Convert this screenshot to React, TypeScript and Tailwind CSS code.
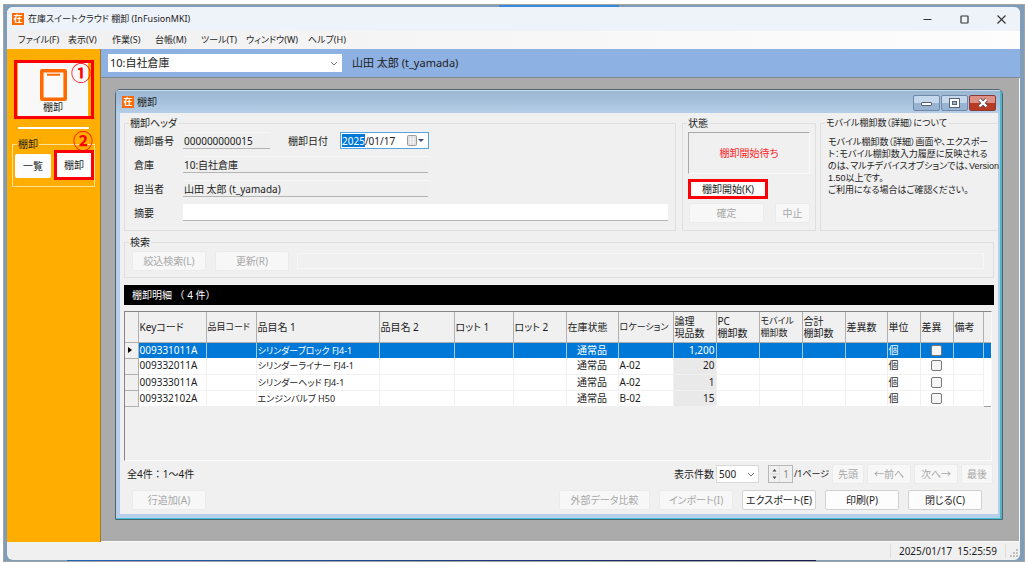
import { useEffect, useRef } from "react";
import type { ReactNode } from "react";

const menuItems = [
  { label: "ファイル(F)", className: "w-[50px]" },
  { label: "表示(V)", className: "w-[44px]" },
  { label: "作業(S)", className: "w-[43px]" },
  { label: "台帳(M)", className: "w-[46px]" },
  { label: "ツール(T)", className: "w-[45px]" },
  { label: "ウィンドウ(W)", className: "w-[62px]" },
  { label: "ヘルプ(H)", className: "w-[50px]" },
];

const columns = [
  { label: "Keyコード", className: "w-[68px]" },
  { label: "品目コード", className: "w-[50px] text-[9px]" },
  { label: "品目名 1", className: "w-[123px]" },
  { label: "品目名 2", className: "w-[75px]" },
  { label: "ロット 1", className: "w-[59px]" },
  { label: "ロット 2", className: "w-[53px]" },
  { label: "在庫状態", className: "w-[52px]" },
  { label: "ロケーション", className: "w-[55px] text-[9px]" },
  { label: "論理\n現品数", className: "w-[43px]" },
  { label: "PC\n棚卸数", className: "w-[43px]" },
  { label: "モバイル\n棚卸数", className: "w-[43px] text-[9px]" },
  { label: "合計\n棚卸数", className: "w-[43px]" },
  { label: "差異数", className: "w-[42px]" },
  { label: "単位", className: "w-[33px]" },
  { label: "差異", className: "w-[33px]" },
  { label: "備考", className: "w-[30px]" },
];

const rows = [
  { key: "009331011A", name: "シリンダーブロック FJ4-1", location: "", qty: "1,200" },
  { key: "009332011A", name: "シリンダーライナー FJ4-1", location: "A-02", qty: "20" },
  { key: "009333011A", name: "シリンダーヘッド FJ4-1", location: "A-02", qty: "1" },
  { key: "009332102A", name: "エンジンバルブ H50", location: "B-02", qty: "15" },
];

const AppLogo = () => (
  <span className="flex h-3 w-3 shrink-0 items-center justify-center bg-[#ff6a00] text-[9px] leading-3 font-bold text-white">
    在
  </span>
);

const Chevron = () => (
  <svg viewBox="0 0 8 5" className="pointer-events-none absolute right-1 h-[5px] w-2">
    <path d="M1 1l3 3 3-3" fill="none" stroke="#666" strokeWidth="0.9" />
  </svg>
);

type GroupProps = {
  title: string;
  className?: string;
  children?: ReactNode;
};

const Group = ({ title, className = "", children }: GroupProps) => (
  <fieldset className={`min-w-0 border border-[#dfdfdf] ${className}`}>
    <legend className="ml-1 px-px leading-3">{title}</legend>
    {children}
  </fieldset>
);

type PushButtonProps = {
  className?: string;
  disabled?: boolean;
  children?: ReactNode;
};

const PushButton = ({ className = "", disabled, children }: PushButtonProps) => (
  <button
    type="button"
    disabled={disabled}
    className={`flex h-5 shrink-0 items-center justify-center rounded-[2px] border text-[10px] leading-4 whitespace-nowrap ${
      disabled
        ? "border-[#ebebeb] bg-[#f7f7f7] text-[#a8a8a8]"
        : "border-[#d2d2d2] bg-[#fdfdfd] text-[#1c1c1c]"
    } ${className}`}
  >
    {children}
  </button>
);

type FieldProps = {
  id: string;
  label: string;
  value: string;
  width: string;
  readOnly?: boolean;
};

const Field = ({ id, label, value, width, readOnly }: FieldProps) => (
  <div className="flex h-[17px] items-center">
    <label htmlFor={id} className="w-[49px] shrink-0">
      {label}
    </label>
    <input
      id={id}
      defaultValue={value}
      readOnly={readOnly}
      className={`h-[17px] min-w-0 border-b border-[#b4b4b4] px-px outline-none ${
        readOnly ? "border-t border-t-[#f7f7f7] bg-[#efefef]" : "bg-white"
      } ${width}`}
    />
  </div>
);

const Sidebar = () => (
  <aside className="w-[94px] shrink-0 border-r border-[#9a7a30] bg-[#ffae00] px-[5px]">
    <div className="relative mt-[11px] ml-[2px] w-[80px] border-3 border-[#fb0007] pr-[3px] pl-px">
      <button
        type="button"
        className="flex h-[53px] w-full flex-col items-center justify-end bg-[#f8f8f8] pb-[3px] text-[10px] leading-3"
      >
        <svg viewBox="0 0 27 32" className="h-8 w-[27px]">
          <rect x="1.800" y="1.800" width="23.400" height="28.400" rx="0.500" fill="#fafafa" stroke="#ff6a00" strokeWidth="3.600" />
          <path d="M7 5.800h13" stroke="#ff6a00" strokeWidth="2" />
        </svg>
        <span>棚卸</span>
      </button>
      <span className="absolute -top-px right-0 text-[20px] leading-6 font-bold text-[#fb0007]">①</span>
    </div>
    <div className="mx-[6px] mt-2 h-[2px] bg-white" />
    <fieldset className="relative mt-[9px] h-[49px] border border-[#ffe09a]">
      <legend className="ml-[4px] px-px text-[10px] leading-3">棚卸</legend>
      <div className="flex gap-[3px] pl-[2px]">
        <button type="button" className="mt-[4px] h-6 w-9 rounded-[2px] bg-[#fcfcfc] text-[10px]">
          一覧
        </button>
        <button type="button" className="h-[30px] w-10 border-3 border-[#fb0007] bg-[#fcfcfc] text-[10px]">
          棚卸
        </button>
      </div>
      <span className="absolute -top-[20px] right-px text-[20px] leading-6 font-bold text-[#fb0007]">②</span>
    </fieldset>
  </aside>
);

const DateField = () => {
  const ref = useRef<HTMLInputElement>(null);

  // start with the year part selected
  useEffect(() => {
    ref.current?.focus();
    ref.current?.setSelectionRange(0, 4);
  }, []);

  return (
    <div className="flex h-[17px] w-[89px] shrink-0 items-center border border-[#55a3e0] bg-white pr-[3px]">
      <input
        id="stock-date"
        ref={ref}
        defaultValue="2025/01/17"
        className="h-[13px] w-[64px] min-w-0 flex-1 bg-white px-px outline-none selection:bg-[#0078d7] selection:text-white"
      />
      <svg viewBox="0 0 18 11" className="h-[11px] w-[18px] shrink-0">
        <rect x="0.500" y="0.500" width="9" height="10" rx="1" fill="#dcdce0" stroke="#a39a98" />
        <path d="M3.500 1v9M6.500 1v9M1 4h8M1 7h8" stroke="#f8f8fa" strokeWidth="0.700" />
        <path d="M11 4h6l-3 3z" fill="#35517c" />
      </svg>
    </div>
  );
};

const HeaderGroup = () => (
  <Group title="棚卸ヘッダ" className="flex-1">
    <div className="flex flex-col gap-[7px] pt-[3px] pr-[7px] pl-[9px]">
      <div className="flex items-center">
        <Field id="stock-no" label="棚卸番号" value="000000000015" width="w-[87px]" readOnly />
        <label htmlFor="stock-date" className="ml-[18px] w-[52px]">
          棚卸日付
        </label>
        <DateField />
      </div>
      <Field id="warehouse" label="倉庫" value="10:自社倉庫" width="w-[245px]" readOnly />
      <Field id="owner" label="担当者" value="山田 太郎 (t_yamada)" width="w-[245px]" readOnly />
      <Field id="summary" label="摘要" value="" width="flex-1" />
    </div>
  </Group>
);

const StatusGroup = () => (
  <Group title="状態" className="w-[134px] shrink-0">
    <div className="px-[5px] pt-[3px]">
      <div className="flex h-[42px] items-center justify-center border border-t-[#a8a8a8] border-r-[#fafafa] border-b-[#fafafa] border-l-[#a8a8a8] text-[#ff2828]">
        棚卸開始待ち
      </div>
      <button
        type="button"
        className="mt-[5px] flex h-5 w-[80px] items-center justify-center border-3 border-[#fb0007] bg-[#fdfdfd]"
      >
        棚卸開始(K)
      </button>
      <div className="mt-[4px] flex justify-between pl-px">
        <PushButton className="w-[75px]" disabled>
          確定
        </PushButton>
        <PushButton className="w-[35px]" disabled>
          中止
        </PushButton>
      </div>
    </div>
  </Group>
);

const NoteGroup = () => (
  <Group title="モバイル棚卸数（詳細）について" className="w-[178px] shrink-0 border-r-0 text-[9px]">
    <p className="pt-[7px] pl-[7px] font-['Liberation_Sans','Noto_Sans_CJK_JP',sans-serif] leading-3 whitespace-nowrap">
      モバイル棚卸数（詳細）画面や、エクスポー
      <br />
      ト：モバイル棚卸数入力履歴に反映される
      <br />
      のは、マルチデバイスオプションでは、Version
      <br />
      1.50以上です。
      <br />
      ご利用になる場合はご確認ください。
    </p>
  </Group>
);

const DetailTable = () => (
  <div className="mt-[6px] mr-[6px] flex-1 border-t border-r border-b border-l border-t-[#858585] border-r-[#fafafa] border-b-[#fafafa] border-l-[#858585]">
    <table className="w-full table-fixed border-b border-[#a0a0a0]">
      <thead>
        <tr className="h-[30px]">
          <th className="w-[13px] border-r border-b border-[#b0b0b0]" />
          {columns.map((column) => (
            <th
              key={column.label}
              className={`overflow-hidden border-r border-b border-[#b0b0b0] pl-px text-left align-middle leading-3 font-normal whitespace-pre ${column.className}`}
            >
              {column.label}
            </th>
          ))}
          <th className="border-b border-[#b0b0b0]" />
        </tr>
      </thead>
      <tbody>
        {rows.map((row, index) => {
          const selected = index === 0;
          const cell = `border-r px-px whitespace-nowrap ${
            selected ? "border-[#a8c8e8]" : "border-b border-[#f0f0f0]"
          }`;
          return (
            <tr
              key={row.key}
              className={`h-4 leading-[15px] ${selected ? "bg-[#0078d7] text-white" : "bg-white"}`}
            >
              <td className="border-r border-b border-[#b0b0b0] bg-[#f0f0f0]">
                {selected && (
                  <svg viewBox="0 0 4 6" className="ml-[3px] h-[6px] w-1">
                    <path d="M0 0l4 3-4 3z" fill="#000" />
                  </svg>
                )}
              </td>
              <td className={cell}>{row.key}</td>
              <td className={cell} />
              <td className={`${cell} text-[9px]`}>{row.name}</td>
              <td className={cell} />
              <td className={cell} />
              <td className={cell} />
              <td className={`${cell} text-center`}>通常品</td>
              <td className={cell}>{row.location}</td>
              <td className={`${cell} text-right ${selected ? "" : "bg-[#e9e9e9]"}`}>{row.qty}</td>
              <td className={cell} />
              <td className={cell} />
              <td className={cell} />
              <td className={cell} />
              <td className={cell}>個</td>
              <td className={`${cell} text-center`}>
                <input
                  type="checkbox"
                  aria-label={`差異 ${row.key}`}
                  className="mx-auto block h-[11px] w-[11px] appearance-none rounded-[2px] border border-[#777] bg-[#f5f5f5]"
                />
              </td>
              <td className={cell} />
              <td />
            </tr>
          );
        })}
      </tbody>
    </table>
  </div>
);

const Pager = () => (
  <div className="mt-[3px] mr-[5px] flex h-5 items-center">
    <span className="ml-[3px] [font-feature-settings:normal]">全4件：1～4件</span>
    <label htmlFor="page-size" className="mr-[2px] ml-auto">
      表示件数
    </label>
    <div className="relative flex items-center">
      <select
        id="page-size"
        className="h-[18px] w-[43px] appearance-none border border-[#d8d8d8] bg-white pl-[2px] text-[10px] leading-4"
      >
        <option>500</option>
      </select>
      <Chevron />
    </div>
    <div className="ml-[9px] flex h-[18px] w-[25px] items-center border border-[#b8b8b8] bg-[#f0f0f0]">
      <svg viewBox="0 0 11 16" className="h-4 w-[11px] shrink-0">
        <path d="M3.500 5.500l2-2.500 2 2.500zM3.500 10.500l2 2.500 2-2.500z" fill="#444" />
        <path d="M1 8h9M11 0v16" stroke="#d5d5d5" />
      </svg>
      <input
        aria-label="ページ"
        defaultValue="1"
        disabled
        className="w-3 min-w-0 pr-[3px] text-right text-[#8a8a8a]"
      />
    </div>
    <span className="ml-px w-[38px] text-[9px] whitespace-nowrap">/1ページ</span>
    <div className="flex gap-[3px]">
      <PushButton className="w-[32px]" disabled>
        先頭
      </PushButton>
      <PushButton className="w-[44px]" disabled>
        ←前へ
      </PushButton>
      <PushButton className="w-[44px]" disabled>
        次へ→
      </PushButton>
      <PushButton className="w-[32px]" disabled>
        最後
      </PushButton>
    </div>
  </div>
);

const StockWindow = () => (
  <section className="mt-[11px] mr-4 mb-[21px] ml-[14px] flex min-w-0 flex-1 flex-col rounded-t-[5px] border border-[#4e6470] bg-[#b7cfe9]">
    <div className="flex min-w-0 flex-1 flex-col rounded-t-[4px] border-t border-r-2 border-b border-t-[#c9dcec] border-r-[#4fb4c6] border-b-[#3cc4dc] bg-[#b7cfe9]">
      <header className="flex h-[22px] items-center bg-linear-to-b from-[#9ab6d3] to-[#b5cde7] pr-[4px] pl-[6px]">
        <AppLogo />
        <h2 className="ml-[3px] flex-1 text-[10px]">棚卸</h2>
        <div className="flex gap-px pt-px">
          <button type="button" aria-label="最小化" className="flex h-4 w-[27px] items-center justify-center rounded-[2px] border border-[#7088a6] bg-linear-to-b from-[#c5d8eb] from-50% to-[#98b4d2] to-50%">
            <svg viewBox="0 0 13 10" className="h-[10px] w-[13px]">
              <rect x="1.500" y="4.500" width="10" height="3" rx="0.500" fill="#fff" stroke="#56647a" />
            </svg>
          </button>
          <button type="button" aria-label="最大化" className="flex h-4 w-[27px] items-center justify-center rounded-[2px] border border-[#7088a6] bg-linear-to-b from-[#c5d8eb] from-50% to-[#98b4d2] to-50%">
            <svg viewBox="0 0 11 10" className="h-[10px] w-[11px]">
              <rect x="0.500" y="0.500" width="10" height="9" fill="#fff" stroke="#56647a" />
              <rect x="3.500" y="3.500" width="4" height="3" fill="#9db7d4" stroke="#56647a" />
            </svg>
          </button>
          <button type="button" aria-label="閉じる" className="flex h-4 w-[27px] items-center justify-center rounded-[2px] border border-[#8c3a35] bg-linear-to-b from-[#dd9186] from-50% to-[#b93a22] to-50%">
            <svg viewBox="0 0 12 10" className="h-[10px] w-3">
              <path d="M2.500 1.500l7 7M9.500 1.500l-7 7" stroke="#5f4650" strokeWidth="4" />
              <path d="M2.500 1.500l7 7M9.500 1.500l-7 7" stroke="#fff" strokeWidth="2.400" />
            </svg>
          </button>
        </div>
      </header>
      <div className="mr-[2px] mb-[4px] ml-[4px] flex flex-1 flex-col bg-[#f0f0f0] pt-[4px] pb-[4px] pl-[4px]">
        <div className="flex min-h-[114px]">
          <HeaderGroup />
          <div className="w-[6px] shrink-0" />
          <StatusGroup />
          <div className="w-[4px] shrink-0" />
          <NoteGroup />
        </div>
        <Group title="検索" className="mt-[5px] mr-[4px]">
          <div className="flex items-center pt-[3px] pr-[9px] pb-[6px] pl-[7px]">
            <PushButton className="w-[74px]" disabled>
              絞込検索(L)
            </PushButton>
            <PushButton className="ml-[9px] w-[74px]" disabled>
              更新(R)
            </PushButton>
            <input
              aria-label="検索条件"
              disabled
              className="ml-[8px] h-4 min-w-0 flex-1 border border-[#f7f7f7]"
            />
          </div>
        </Group>
        <h3 className="mt-[7px] mr-[4px] flex h-5 items-center bg-black pl-2 whitespace-pre text-white [font-feature-settings:normal]">
          棚卸明細 （ 4 件）
        </h3>
        <DetailTable />
        <Pager />
        <div className="mt-[6px] mr-4 ml-2 flex gap-[9px]">
          <PushButton className="mr-auto w-[74px]" disabled>
            行追加(A)
          </PushButton>
          <PushButton className="w-[91px]" disabled>
            外部データ比較
          </PushButton>
          <PushButton className="w-[74px]" disabled>
            インポート(I)
          </PushButton>
          <PushButton className="w-[74px]">エクスポート(E)</PushButton>
          <PushButton className="w-[74px]">印刷(P)</PushButton>
          <PushButton className="w-[74px]">閉じる(C)</PushButton>
        </div>
      </div>
    </div>
  </section>
);

const App = () => {
  return (
    <div className="flex min-h-screen flex-col bg-white pt-1 pr-[3px] pb-px pl-[3px] font-['Noto_Sans','Noto_Sans_CJK_JP',sans-serif] text-[10px] leading-[14px] text-[#1c1c1c] [font-feature-settings:'palt']">
      <div className="flex flex-1 flex-col border border-[#a4a4a4] bg-[#7f9db9]">
        <div className="ml-[495px] h-[2px] w-[120px] bg-[#3689dc]" />
        <main className="mr-[4px] ml-[3px] flex flex-1 flex-col overflow-hidden rounded-[6px] bg-[#f0f0f0]">
          <header className="flex h-6 items-center bg-[#eef3fa] pl-[5px]">
            <AppLogo />
            <h1 className="ml-1 flex-1 text-[9px]">在庫スイートクラウド 棚卸 (InFusionMKI)</h1>
            <div className="flex gap-7 pr-[14px]">
              <button type="button" aria-label="最小化">
                <svg viewBox="0 0 9 9" className="h-[9px] w-[9px]">
                  <path d="M0.500 4.500h8" stroke="#333" />
                </svg>
              </button>
              <button type="button" aria-label="最大化">
                <svg viewBox="0 0 9 9" className="h-[9px] w-[9px]">
                  <rect x="1" y="1" width="7" height="7" rx="0.500" fill="none" stroke="#333" strokeWidth="1.200" />
                </svg>
              </button>
              <button type="button" aria-label="閉じる">
                <svg viewBox="0 0 9 9" className="h-[9px] w-[9px]">
                  <path d="M0.500 0.500l8 8M8.500 0.500l-8 8" stroke="#333" strokeWidth="1.100" />
                </svg>
              </button>
            </div>
          </header>
          <nav className="flex h-[18px] items-center bg-linear-to-r from-[#f0f0f0] to-[#fdfdfd] pl-[11px] text-[9px]">
            {menuItems.map((item) => (
              <button key={item.label} type="button" className={`shrink-0 text-left whitespace-nowrap ${item.className}`}>
                {item.label}
              </button>
            ))}
          </nav>
          <div className="flex flex-1">
            <Sidebar />
            <div className="flex min-w-0 flex-1 flex-col">
              <div className="flex h-[29px] items-center border-b border-[#808890] bg-[#8db1e3] pl-[7px] text-[11px]">
                <div className="relative flex items-center">
                  <select
                    aria-label="倉庫"
                    className="h-[18px] w-[234px] appearance-none bg-white pl-[2px] text-[11px] leading-4"
                  >
                    <option>10:自社倉庫</option>
                  </select>
                  <Chevron />
                </div>
                <span className="ml-[10px]">山田 太郎 (t_yamada)</span>
              </div>
              <div className="flex flex-1 border-r border-b border-[#fafafa] bg-[#ababab]">
                <StockWindow />
              </div>
            </div>
          </div>
          <footer className="flex h-[18px] items-center justify-end">
            <time className="border-r border-l border-[#dedede] px-2 whitespace-pre">2025/01/17  15:25:59</time>
            <svg viewBox="0 0 14 14" className="h-[14px] w-[14px]">
              <path d="M10 5h2v2h-2zM10 8h2v2h-2zM7 8h2v2H7zM10 11h2v2h-2zM7 11h2v2H7zM4 11h2v2H4z" fill="#c0c0c0" />
            </svg>
          </footer>
        </main>
        <div className="mr-[208px] ml-[63px] h-px bg-linear-to-r from-[#2463b8] to-[#151c50]" />
      </div>
    </div>
  );
};

export default App;
